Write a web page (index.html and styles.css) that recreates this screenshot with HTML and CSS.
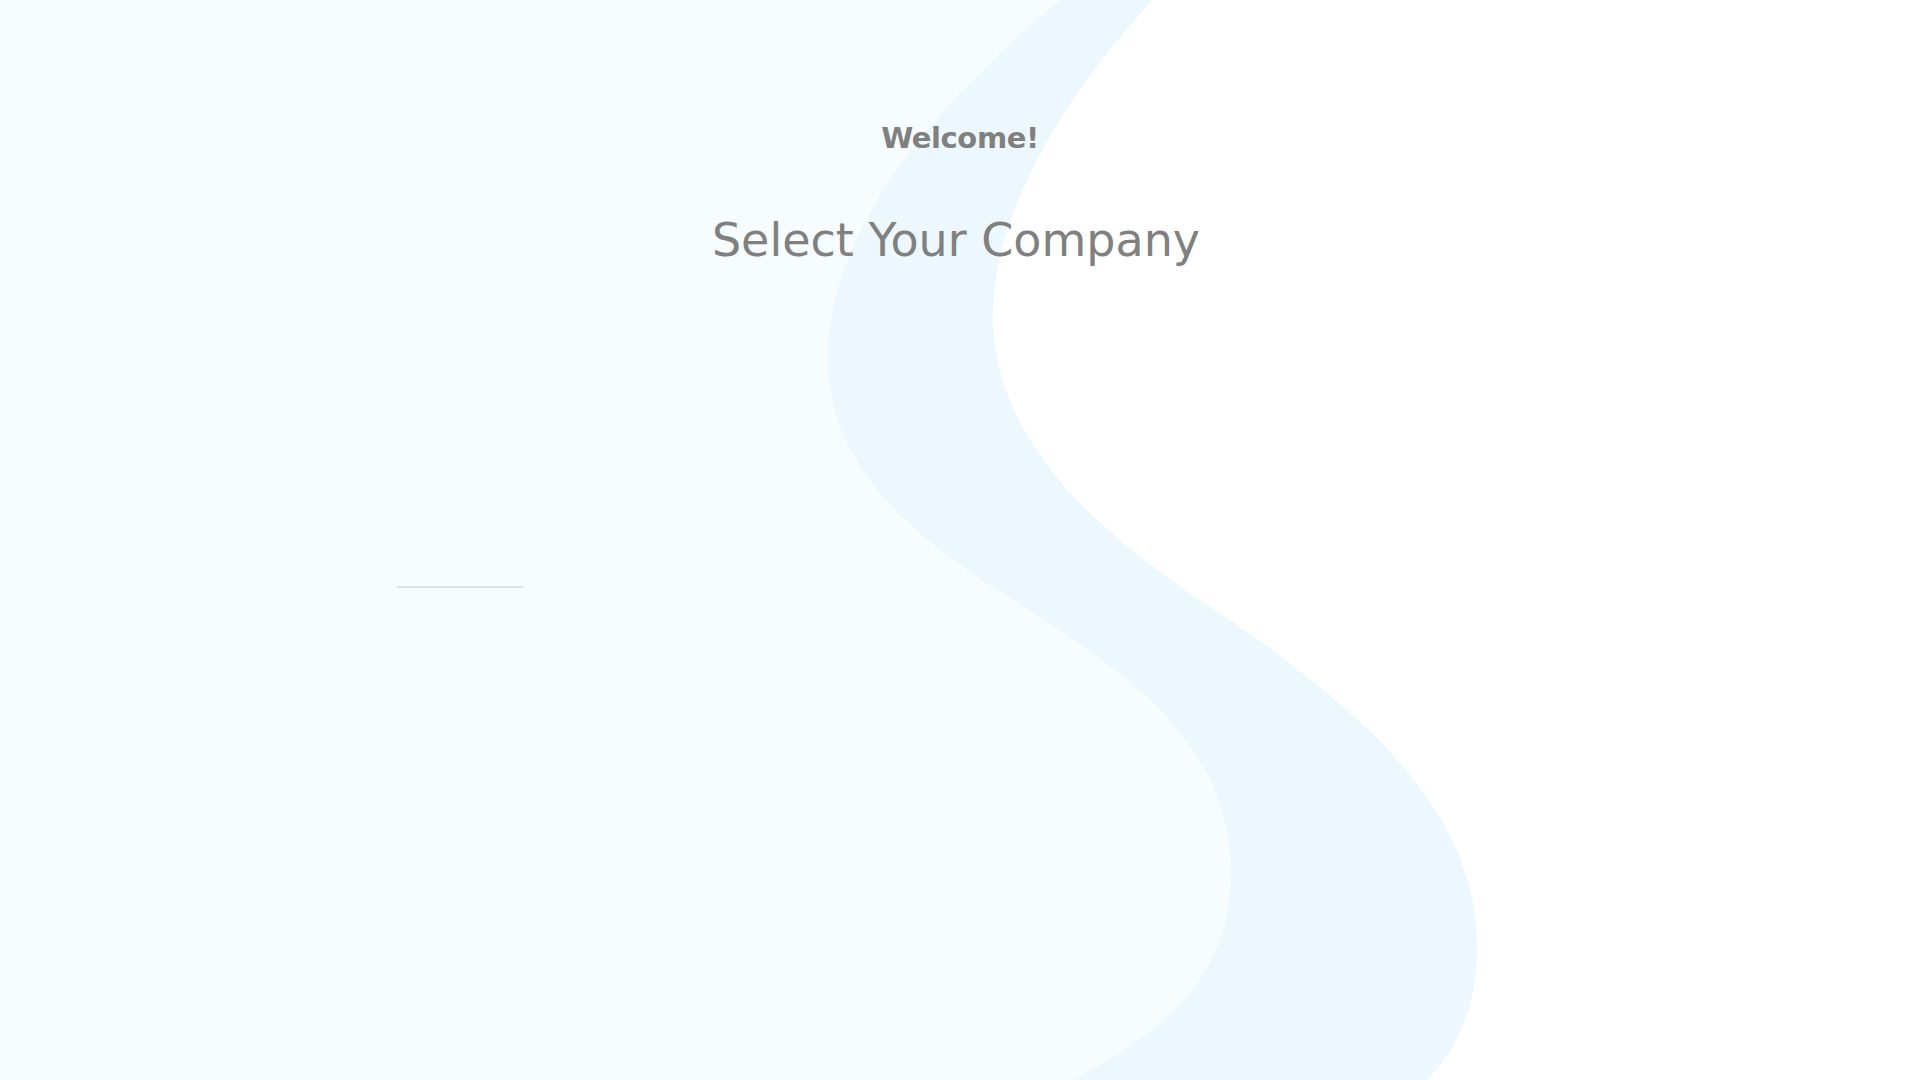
FILE: index.html
```html
<!DOCTYPE html>
<html lang="en">
<head>
<meta charset="utf-8">
<title>Select Your Company</title>
<link rel="stylesheet" href="styles.css">
</head>
<body>
<div class="page">
  <svg class="backdrop" viewBox="0 0 1920 1080" preserveAspectRatio="none" aria-hidden="true">
    <path class="wave-outer" d="M0,0 L1153,0 C1060,100 990,220 993,323 C996,430 1080,520 1200,600 C1340,693 1477,800 1477,945 C1477,1000 1462,1045 1427,1080 L0,1080 Z"/>
    <path class="wave-inner" d="M0,0 L1060,0 C970,75 828,210 828,357 C828,460 900,530 1013,600 C1120,668 1231,740 1231,873 C1231,980 1160,1040 1050,1090 L0,1090 Z"/>
  </svg>
  <main class="content">
    <h2 class="welcome">Welcome!</h2>
    <h1 class="title">Select Your Company</h1>
    <section class="companies">
      <div class="loader"></div>
    </section>
  </main>
</div>
</body>
</html>
```
FILE: styles.css
```css
html, body {
  margin: 0;
  padding: 0;
  width: 100%;
  height: 100%;
  background: #ffffff;
  overflow: hidden;
}

.page {
  position: relative;
  width: 100%;
  height: 100vh;
  font-family: "DejaVu Sans", "Noto Sans", sans-serif;
  color: #808080;
}

.backdrop {
  position: absolute;
  inset: 0;
  width: 100%;
  height: 100%;
  z-index: 0;
}

.wave-outer {
  fill: #edf8fe;
}

.wave-inner {
  fill: #f7fcff;
}

.content {
  position: relative;
  z-index: 1;
  display: flex;
  flex-direction: column;
  align-items: center;
  padding-top: 120px;
}

.welcome {
  margin: 0;
  font-size: 29px;
  line-height: 36px;
  font-weight: 700;
  letter-spacing: -0.4px;
}

.title {
  margin: 58px 0 0 -8px;
  font-size: 46px;
  line-height: 52px;
  font-weight: 400;
  letter-spacing: 0;
}

.companies {
  width: 1126px;
  margin-top: 320px;
  display: flex;
}

.loader {
  width: 127px;
  height: 2px;
  background: #dde1e6;
}
```
